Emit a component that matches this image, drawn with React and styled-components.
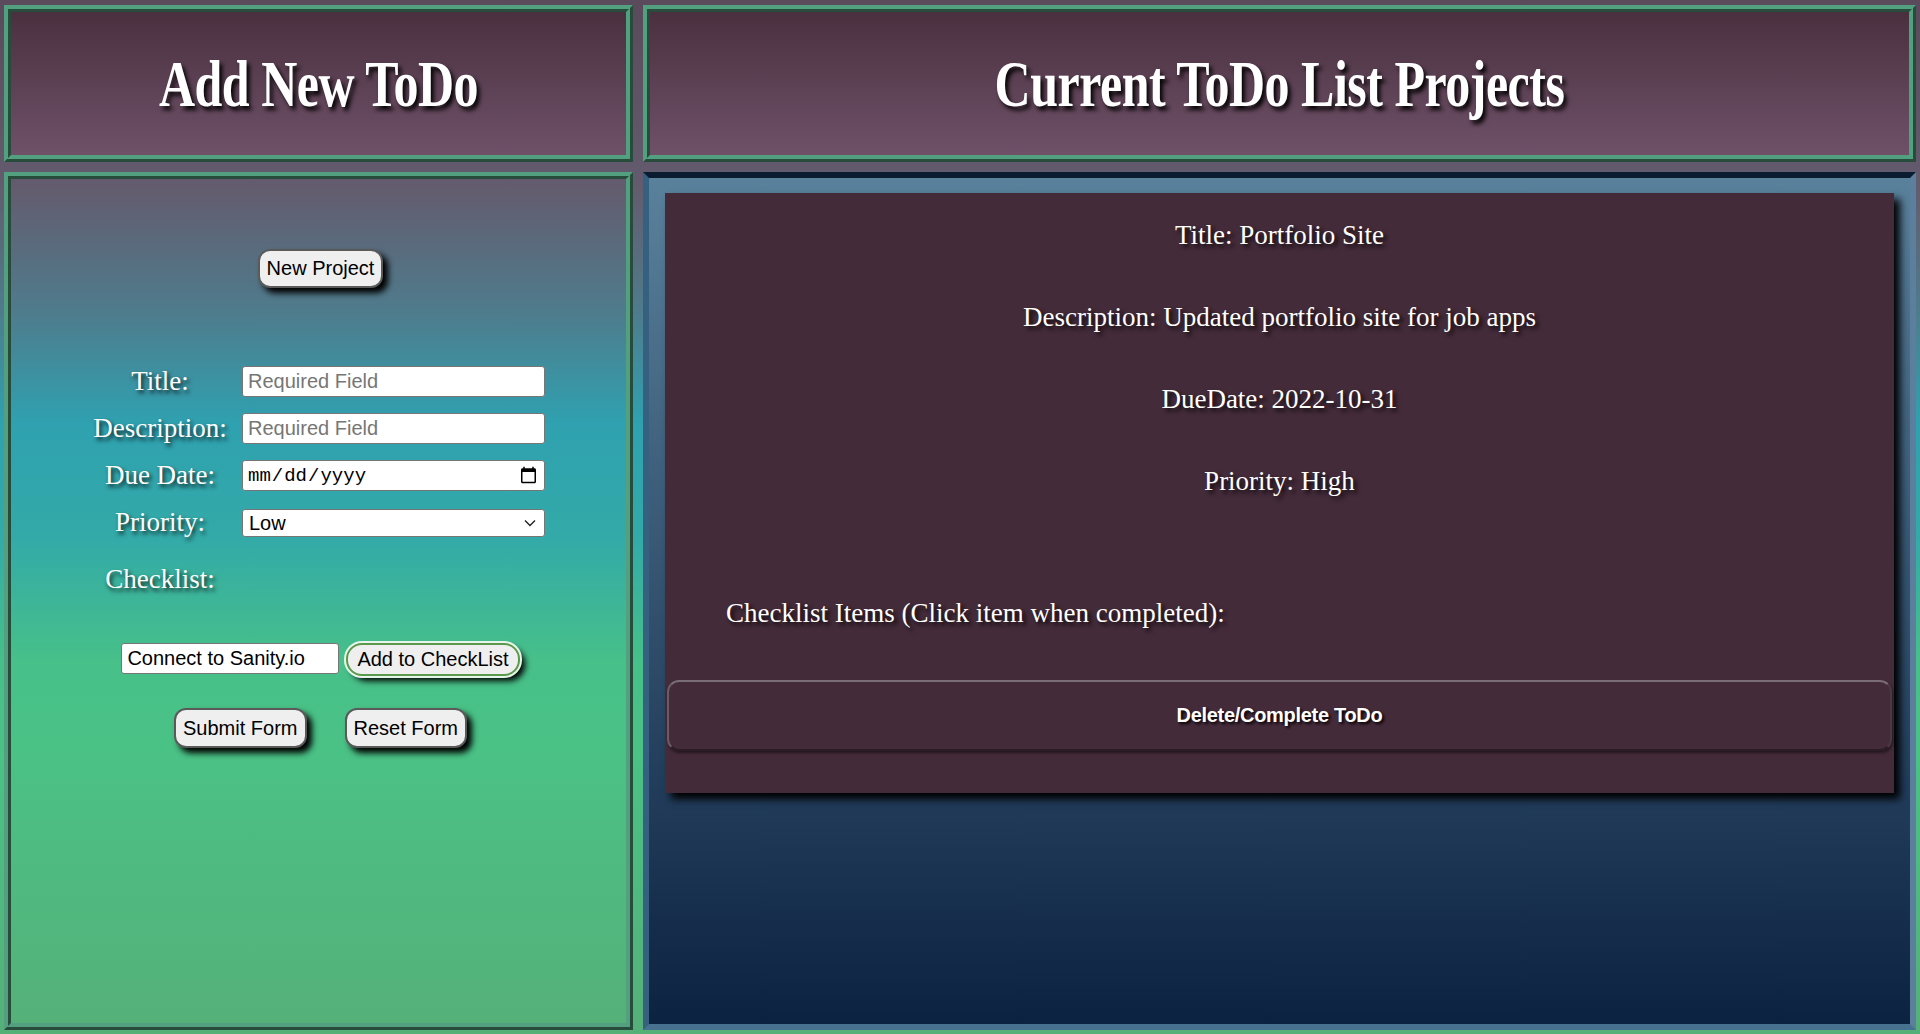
import React from 'react'
import styled, { createGlobalStyle } from 'styled-components'

const GlobalStyle = createGlobalStyle`
  html, body {
    margin: 0;
    padding: 0;
  }
  body {
    height: 1034px;
    overflow: hidden;
    font-family: "Liberation Serif", "Times New Roman", serif;
    background: linear-gradient(
      to bottom,
      #5a4a5b 0%,
      #635c6e 18%,
      #4f7b8c 30%,
      #2fa1b0 41%,
      #33aaa8 52%,
      #47c089 64%,
      #4ac286 72%,
      #55b078 100%
    );
  }
  * { box-sizing: border-box; }
`;

const Page = styled.div`
  display: grid;
  grid-template-columns: 629px 1fr;
  grid-template-rows: 157px 1fr;
  gap: 10px;
  height: 1034px;
  padding: 5px 4px 4px 4px;
`;

const HeaderBox = styled.header`
  display: flex;
  align-items: center;
  justify-content: center;
  border: 7px ridge #52a07f;
  background: linear-gradient(to bottom, #4a303f, #6e5168);
  h1 {
    margin: 0;
    display: inline-block;
    color: #fff;
    font-family: "Liberation Serif", "Times New Roman", serif;
    font-weight: 700;
    font-size: 50px;
    letter-spacing: -0.5px;
    transform: scaleY(1.3);
    text-shadow: 3px 3px 4px rgba(0, 0, 0, 0.95);
  }
`;

const FormPanel = styled.section`
  border: 7px ridge #52a07f;
  padding-top: 70px;
  display: flex;
  flex-direction: column;
`;

const Button = styled.button`
  height: ${(p) => p.$h || 40}px;
  padding: 0 ${(p) => p.$px || 7}px;
  font-family: "Liberation Sans", Arial, sans-serif;
  font-size: 20px;
  color: #000;
  background: #efefef;
  border: 2px solid #5a5a5a;
  border-radius: 12px;
  box-shadow: 5px 5px 6px #000;
  cursor: pointer;
`;

const GreenButton = styled(Button)`
  border: 2px solid #5b9a4a;
  box-shadow: 0 0 0 2px #e9f5ec, 5px 5px 6px #000;
  border-radius: 16px;
`;

const CenterRow = styled.div`
  display: flex;
  justify-content: center;
  gap: ${(p) => p.$gap || 0}px;
  margin-top: ${(p) => p.$mt || 0}px;
  padding-left: ${(p) => p.$pl || 0}px;
`;

const FormGrid = styled.div`
  display: grid;
  grid-template-columns: 164px 303px;
  grid-auto-rows: 31px;
  row-gap: 16px;
  align-items: center;
  margin: 78px 0 0 67px;
`;

const Label = styled.label`
  text-align: center;
  color: #fff;
  font-size: 27px;
  line-height: 31px;
  text-shadow: 2px 3px 4px rgba(0, 0, 0, 0.85);
  margin-top: ${(p) => p.$mt || 0}px;
`;

const TextInput = styled.input`
  height: 31px;
  width: ${(p) => p.$w || 303}px;
  padding: 0 5px;
  font-family: "Liberation Sans", Arial, sans-serif;
  font-size: 20px;
  color: #000;
  background: #fff;
  border: 1px solid #767676;
  border-radius: 3px;
  &::placeholder { color: #767676; }
`;

const DateInput = styled(TextInput)`
  font-family: "Liberation Mono", "Courier New", monospace;
  font-size: 19px;
  padding: 0 4px;
`;

const SelectWrap = styled.div`
  position: relative;
  width: 303px;
  height: 28px;
  svg {
    position: absolute;
    right: 9px;
    top: 10px;
    pointer-events: none;
  }
`;

const Select = styled.select`
  appearance: none;
  height: 28px;
  width: 100%;
  padding: 0 6px;
  font-family: "Liberation Sans", Arial, sans-serif;
  font-size: 20px;
  color: #000;
  background: #fff;
  border: 1px solid #767676;
  border-radius: 3px;
`;

const ListPanel = styled.section`
  border-style: solid;
  border-width: 6px;
  border-color: #0b1c31 #5b7f9c #48708f #35607f;
  background: linear-gradient(to bottom, #5a819c 0%, #0c2241 100%);
  padding: 15px 16px;
`;

const Card = styled.article`
  background: #442b3a;
  box-shadow: 6px 6px 8px #000;
  padding: 26px 2px 42px;
  color: #fff;
`;

const Field = styled.p`
  margin: 0 0 50px;
  text-align: center;
  font-size: 27px;
  line-height: 32px;
  text-shadow: 3px 3px 4px rgba(0, 0, 0, 0.9);
`;

const ChecklistTitle = styled(Field)`
  text-align: left;
  margin: 100px 0 51px;
  padding-left: 59px;
`;

const DeleteButton = styled.button`
  display: block;
  width: 100%;
  height: 71px;
  background: transparent;
  border: 2px solid;
  border-color: #7a6d78 #4a3845 #2b1c26 #6a5b67;
  border-radius: 12px;
  box-shadow: 1px 2px 3px rgba(0, 0, 0, 0.5);
  color: #fff;
  font-family: "Liberation Sans", Arial, sans-serif;
  font-weight: 700;
  font-size: 20px;
  letter-spacing: -0.3px;
  text-shadow: 2px 2px 3px #000;
  cursor: pointer;
`;

export default function App() {
  return (
    <>
      <GlobalStyle />
      <Page>
        <HeaderBox><h1>Add New ToDo</h1></HeaderBox>
        <HeaderBox><h1>Current ToDo List Projects</h1></HeaderBox>

        <FormPanel>
          <CenterRow $pl={4}>
            <Button $h={39} $px={7}>New Project</Button>
          </CenterRow>

          <FormGrid>
            <Label>Title:</Label>
            <TextInput placeholder="Required Field" />
            <Label>Description:</Label>
            <TextInput placeholder="Required Field" />
            <Label>Due Date:</Label>
            <DateInput type="date" />
            <Label>Priority:</Label>
            <SelectWrap>
              <Select defaultValue="Low">
                <option>Low</option>
                <option>Medium</option>
                <option>High</option>
              </Select>
              <svg width="12" height="8" viewBox="0 0 12 8">
                <polyline points="1,1.5 6,6.5 11,1.5" fill="none" stroke="#222" strokeWidth="1.4" />
              </svg>
            </SelectWrap>
            <Label $mt={20}>Checklist:</Label>
          </FormGrid>

          <CenterRow $mt={58} $gap={7} $pl={4}>
            <TextInput $w={218} defaultValue="Connect to Sanity.io" />
            <GreenButton $h={33} $px={9}>Add to CheckList</GreenButton>
          </CenterRow>

          <CenterRow $mt={32} $gap={38} $pl={4}>
            <Button>Submit Form</Button>
            <Button>Reset Form</Button>
          </CenterRow>
        </FormPanel>

        <ListPanel>
          <Card>
            <Field>Title: Portfolio Site</Field>
            <Field>Description: Updated portfolio site for job apps</Field>
            <Field>DueDate: 2022-10-31</Field>
            <Field>Priority: High</Field>
            <ChecklistTitle>Checklist Items (Click item when completed):</ChecklistTitle>
            <DeleteButton>Delete/Complete ToDo</DeleteButton>
          </Card>
        </ListPanel>
      </Page>
    </>
  )
}
